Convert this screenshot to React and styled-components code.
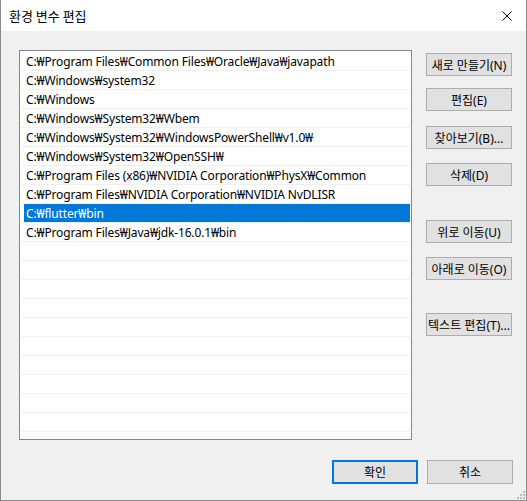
import React from 'react'
import styled, { createGlobalStyle } from 'styled-components'

const GlobalStyle = createGlobalStyle`
  html, body {
    margin: 0;
    padding: 0;
    background: #f0f0f0;
  }
  * {
    box-sizing: border-box;
  }
`

const FONT = `"Noto Sans", "Noto Sans CJK KR", sans-serif`

const Window = styled.div`
  width: 527px;
  height: 501px;
  position: relative;
  display: flex;
  flex-direction: column;
  background: #f0f0f0;
  border: 1px solid #8a8a8a;
  border-top: none;
  font-family: ${FONT};
  font-size: 12px;
  color: #000;
`

const TitleBar = styled.div`
  height: 31px;
  flex-shrink: 0;
  display: flex;
  align-items: center;
  justify-content: space-between;
  background: #fff;
  padding: 0 14px 0 8px;
`

const Title = styled.div`
  font-family: "Noto Sans CJK KR", sans-serif;
  font-size: 13px;
  line-height: 16px;
`

const Body = styled.div`
  flex: 1;
  display: flex;
  flex-direction: column;
  padding: 19px 13px 0 18px;
`

const Main = styled.div`
  display: flex;
  gap: 14px;
`

const List = styled.div`
  width: 393px;
  height: 390px;
  flex-shrink: 0;
  background: #fff;
  border: 1px solid #828790;
  padding: 1px;
  overflow: hidden;
`

const Row = styled.div`
  height: 19px;
  border-bottom: 1px solid #efefef;
  padding-left: 3px;
`

const Cell = styled.div`
  height: 18px;
  line-height: 19px;
  padding-left: 2px;
  letter-spacing: -0.15px;
  white-space: nowrap;
  background: ${(p) => (p.$selected ? '#0078d7' : 'transparent')};
  color: ${(p) => (p.$selected ? '#fff' : '#000')};
`

const Side = styled.div`
  display: flex;
  flex-direction: column;
`

const Button = styled.button`
  width: 86px;
  height: ${(p) => p.$h || 23}px;
  margin-top: ${(p) => p.$top || 0}px;
  padding: 0;
  background: #e1e1e1;
  border: ${(p) => (p.$default ? '2px solid #0078d7' : '1px solid #adadad')};
  font-family: ${FONT};
  font-size: 12px;
  color: #000;
  white-space: nowrap;
  overflow: visible;
  display: flex;
  align-items: center;
  justify-content: center;
`

const Footer = styled.div`
  display: flex;
  justify-content: flex-end;
  gap: 9px;
  margin-top: 20px;
`

const Grip = styled.svg`
  position: absolute;
  right: 1px;
  bottom: 1px;
`

const paths = [
  'C:₩Program Files₩Common Files₩Oracle₩Java₩javapath',
  'C:₩Windows₩system32',
  'C:₩Windows',
  'C:₩Windows₩System32₩Wbem',
  'C:₩Windows₩System32₩WindowsPowerShell₩v1.0₩',
  'C:₩Windows₩System32₩OpenSSH₩',
  'C:₩Program Files (x86)₩NVIDIA Corporation₩PhysX₩Common',
  'C:₩Program Files₩NVIDIA Corporation₩NVIDIA NvDLISR',
  'C:₩flutter₩bin',
  'C:₩Program Files₩Java₩jdk-16.0.1₩bin',
]

const rows = [...paths, ...Array(11).fill('')]

const sideButtons = [
  { label: '새로 만들기(N)', top: 3 },
  { label: '편집(E)', top: 12 },
  { label: '찾아보기(B)...', top: 15 },
  { label: '삭제(D)', top: 14 },
  { label: '위로 이동(U)', top: 34 },
  { label: '아래로 이동(O)', top: 14 },
  { label: '텍스트 편집(T)...', top: 33 },
]

export default function App() {
  return (
    <>
      <GlobalStyle />
      <Window>
        <TitleBar>
          <Title>환경 변수 편집</Title>
          <svg width="10" height="10" viewBox="0 0 10 10">
            <path d="M0.5 0.5 L9.5 9.5 M9.5 0.5 L0.5 9.5" stroke="#000" strokeWidth="1" />
          </svg>
        </TitleBar>
        <Body>
          <Main>
            <List>
              {rows.map((p, i) => (
                <Row key={i}>
                  <Cell $selected={i === 8}>{p}</Cell>
                </Row>
              ))}
            </List>
            <Side>
              {sideButtons.map((b) => (
                <Button key={b.label} $top={b.top}>
                  {b.label}
                </Button>
              ))}
            </Side>
          </Main>
          <Footer>
            <Button $h={24} $default>확인</Button>
            <Button $h={24}>취소</Button>
          </Footer>
        </Body>
        <Grip width="9" height="9" viewBox="0 0 9 9">
          <g fill="#bcbcbc">
            <rect x="7" y="1" width="2" height="2" />
            <rect x="4" y="4" width="2" height="2" />
            <rect x="7" y="4" width="2" height="2" />
            <rect x="1" y="7" width="2" height="2" />
            <rect x="4" y="7" width="2" height="2" />
            <rect x="7" y="7" width="2" height="2" />
          </g>
        </Grip>
      </Window>
    </>
  )
}
